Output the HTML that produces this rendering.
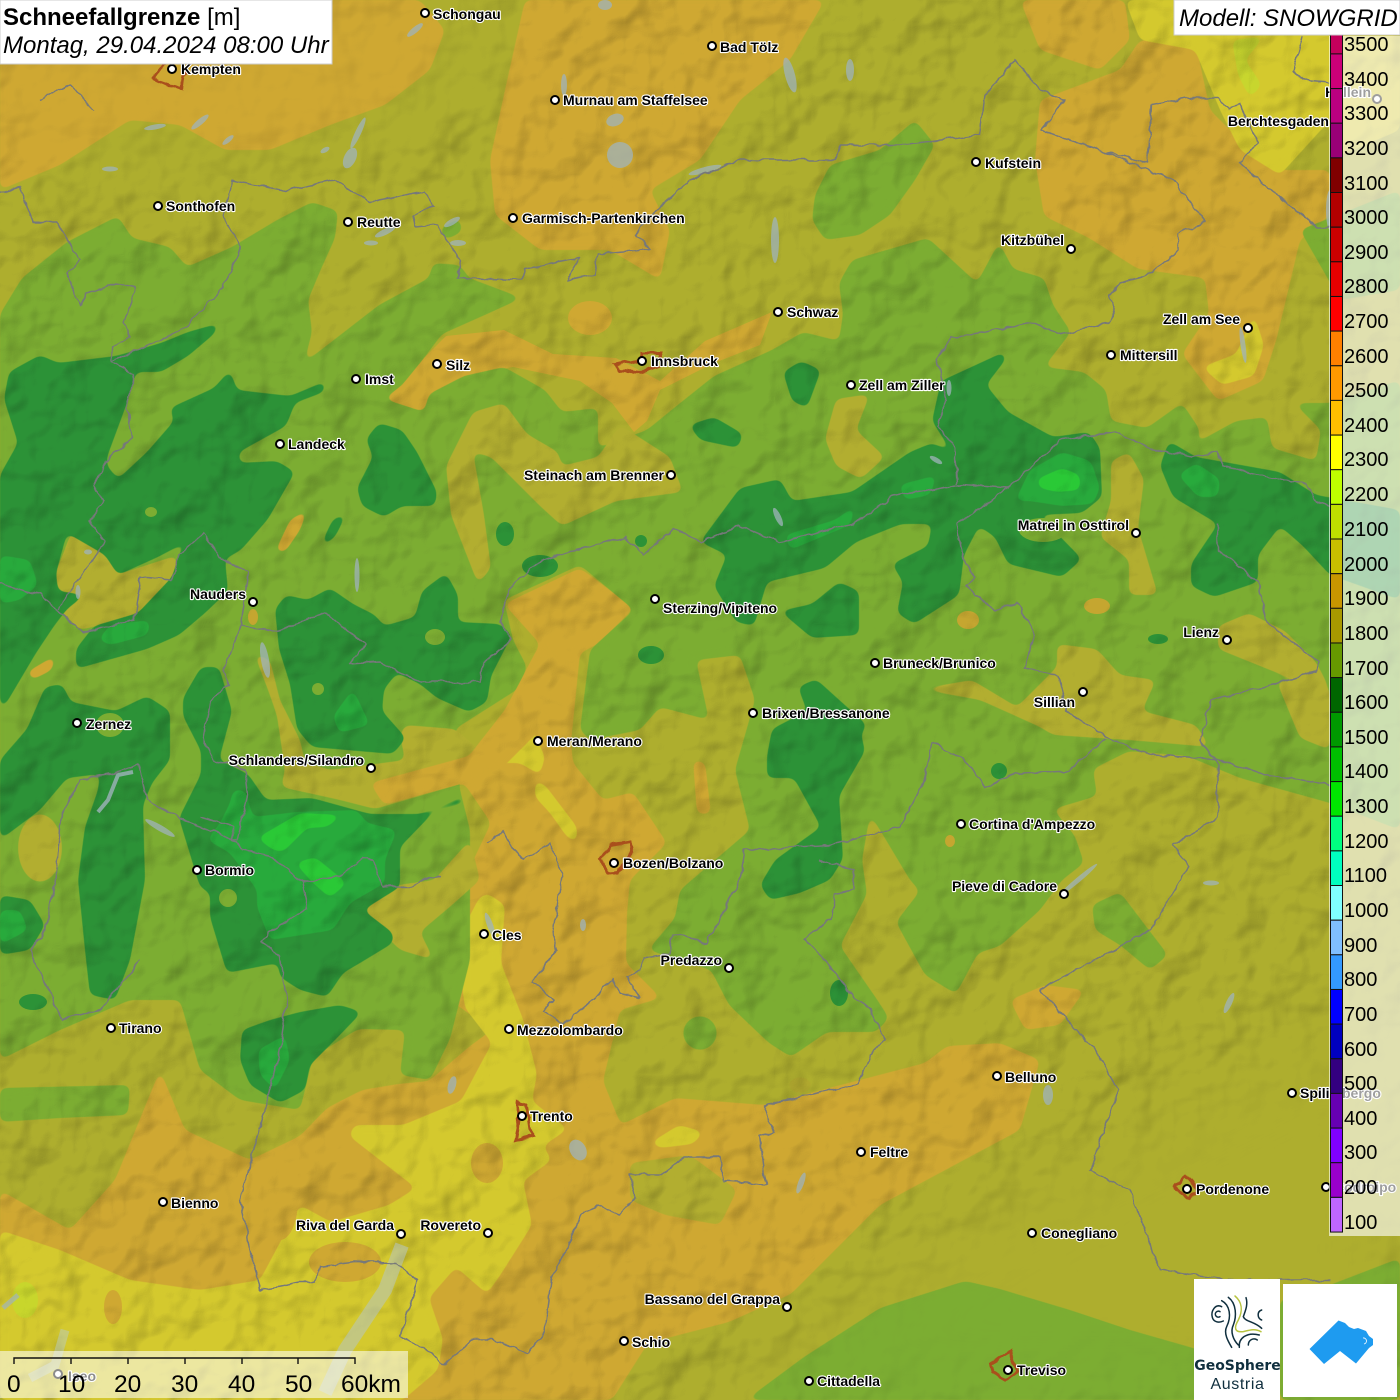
<!DOCTYPE html>
<html lang="de"><head><meta charset="utf-8"><title>Schneefallgrenze</title>
<style>
html,body{margin:0;padding:0;background:#aaa92c;overflow:hidden;width:1400px;height:1400px}
#w{position:relative;width:1400px;height:1400px;overflow:hidden;font-family:"Liberation Sans",sans-serif}
svg{position:absolute;left:0;top:0}
.l text{font:bold 14px "Liberation Sans",sans-serif;fill:#000;stroke:#fff;stroke-width:2.2px;paint-order:stroke;stroke-linejoin:round;dominant-baseline:central}
.l circle{fill:#fff;stroke:#000;stroke-width:2}
.e{text-anchor:end}
.leg text{font:20px "Liberation Sans",sans-serif;fill:#000;dominant-baseline:central}
</style></head><body><div id="w">
<svg width="1400" height="1400" viewBox="0 0 1400 1400">
<defs>
<filter id="g" x="-5%" y="-5%" width="110%" height="110%" color-interpolation-filters="sRGB"><feGaussianBlur stdDeviation="4"/><feComponentTransfer><feFuncA type="linear" slope="10" intercept="-4.5"/></feComponentTransfer></filter>
<filter id="hill" x="0" y="0" width="100%" height="100%" color-interpolation-filters="sRGB"><feTurbulence type="fractalNoise" baseFrequency="0.02" numOctaves="3" seed="11" result="n"/><feDiffuseLighting in="n" surfaceScale="9" diffuseConstant="1.2" lighting-color="#fff"><feDistantLight azimuth="225" elevation="55"/></feDiffuseLighting></filter>
<filter id="bl" x="-10%" y="-10%" width="120%" height="120%"><feGaussianBlur stdDeviation="40"/></filter>
<filter id="wig" x="-2%" y="-2%" width="104%" height="104%"><feTurbulence type="fractalNoise" baseFrequency="0.09" numOctaves="2" seed="3"/><feDisplacementMap in="SourceGraphic" scale="6" xChannelSelector="R" yChannelSelector="G"/></filter>
<mask id="mm" maskUnits="userSpaceOnUse" x="0" y="0" width="1400" height="1400"><rect width="1400" height="1400" fill="#fff"/><g filter="url(#bl)"><path d="M700 1400L1010 1200L1400 1000V1400Z" fill="#000"/><path d="M0 0H520V90L250 170L0 160Z" fill="#444"/></g></mask>
</defs>
<rect width="1400" height="1400" fill="#aeae2e"/>

<!-- orange 1900 -->
<g fill="#cfa832" filter="url(#g)">
<path d="M0 0H420L445 30L430 70L385 105L330 125L270 150L225 150L180 125L130 120L60 165L0 190Z"/>
<path d="M525 0L505 90L490 160L495 215L540 250L610 250L660 280L670 230L650 190L700 160L740 100L790 60L825 0Z"/>
<path d="M1020 0L1040 50L1100 70L1130 40L1125 0Z"/>
<path d="M1044 216L1089 238L1138 269L1205 278L1209 314L1182 354L1218 401L1263 381L1276 341L1289 287L1300 240L1330 215L1330 170L1280 170L1240 140L1210 110L1195 40L1140 40L1120 70L1040 100L1035 160Z"/>
<path d="M504 604L580 568L634 608L598 644L580 653L576 693L571 742L573 763L603 800L633 792L667 843L630 880L627 913L626 963L661 998L620 1010L603 1081L621 1125L675 1098L764 1105L925 1063L947 1046L1000 1043L1040 1060L1020 1130L880 1205L791 1294L729 1322L648 1343L612 1400L0 1400L0 1190L70 1230L115 1180L160 1070L185 1130L250 1160L300 1136L327 1108L362 1090L398 1084L429 1081L470 1046L492 1030L447 998L420 932L452 905L491 823L464 783L384 805L370 783L469 756L505 710L540 644Z"/>
<path d="M1010 1000L1045 985L1085 990L1060 1025L1025 1030Z"/>
</g>
<!-- yellow 2000 -->
<g fill="#d4c92e" filter="url(#g)">
<path d="M1125 0L1140 40L1195 50L1220 110L1240 150L1280 175L1330 120V0Z"/>
<path d="M1330 0H1400V130L1330 160Z"/>
<path d="M487 893L505 905L501 963L523 1019L537 1074L532 1101L568 1129L543 1146L552 1160L523 1181L532 1225L501 1274L487 1294L456 1267L429 1298L443 1339L438 1370L403 1400L0 1400L0 1230L60 1250L130 1280L200 1290L260 1280L300 1205L331 1222L389 1205L416 1188L349 1136L354 1125L403 1125L461 1101L479 1067L492 1043L465 1008L461 977L465 925L479 898Z"/>
<path d="M470 763L500 740L533 730L545 757L540 775L520 763L487 763Z"/>
<path d="M535 780L545 785L577 827L577 843L567 837L550 813L535 797Z"/>
<path d="M1202 367L1236 354L1254 314L1264 345L1254 376L1222 385Z"/>
<path d="M650 1143L679 1125L704 1132L693 1144L660 1148Z"/>
</g>
<path d="M1232 40L1265 36L1245 60L1262 85L1250 98L1238 75Z" fill="#c8d62e" filter="url(#g)"/>
<ellipse cx="25" cy="1300" rx="13" ry="18" fill="#c8d62c"/>
<g fill="#cfa832">
<ellipse cx="487" cy="1163" rx="16" ry="20"/><ellipse cx="345" cy="1262" rx="36" ry="20"/><ellipse cx="113" cy="1307" rx="9" ry="17"/><ellipse cx="280" cy="1200" rx="18" ry="40"/>
<ellipse cx="590" cy="318" rx="22" ry="17"/>
<path d="M424 358L446 336L504 330L553 354L616 358L660 381L705 341L772 312L760 345L714 363L660 390L647 421L634 432L612 403L580 381L513 367L464 376L424 412L384 399L402 385Z"/>
</g>

<!-- green 1700 -->
<g fill="#7cad32" filter="url(#g)">
<path d="M0 314L22 278L67 242L118 216L132 238L170 247L187 267L232 247L277 220L312 202L338 211L335 238L321 269L308 300L312 332L304 363L339 336L379 305L429 278L433 263L460 265L469 278L522 298L487 314L442 334L424 358L402 385L384 399L424 412L429 394L464 376L504 367L545 390L562 412L598 408L598 448L647 430L674 408L714 376L772 350L803 332L839 341L843 314L839 283L852 260L928 238L977 283L999 242L1013 269L1044 278L1053 305L1071 332L1044 367L1084 372L1106 390L1111 421L1147 428L1182 403L1200 430L1196 443L1236 421L1267 417L1272 448L1316 461L1321 430L1294 403L1330 403L1400 380V830L1330 803L1240 778L1187 756L1129 751L1093 769L1097 796L1053 809L1075 836L1084 863L1062 880L1040 910L1000 946L978 953L956 994L925 975L896 922L920 891L910 880L880 830L870 814L862 860L867 894L840 946L876 998L889 1018L876 1032L827 1032L791 1057L769 1043L729 1005L711 970L648 950L675 918L680 890L750 830L735 770L755 700L740 655L696 660L709 720L660 707L640 730L590 740L580 730L590 650L634 610L580 565L504 600L513 640L527 667L518 689L455 729L460 790L470 830L470 960L450 1039L430 1080L400 1075L405 1030L358 1029L313 1057L300 1110L240 1100L200 1070L180 1000L130 1000L60 1030L0 1060Z"/>
<path d="M815 195L830 165L880 150L915 120L935 145L915 180L890 215L860 235L825 240L812 220Z"/>
<path d="M1092 905L1120 892L1145 925L1168 955L1150 970L1120 945L1095 930Z"/>
<path d="M440 228L460 218L462 232L445 240Z"/>
<path d="M746 1400L804 1357L880 1308L965 1281L1000 1289L1070 1310L1130 1330L1200 1350V1400Z"/>
<path d="M1330 1285L1400 1258V1400H1280V1300Z"/>
<path d="M1300 230L1400 190V290L1340 300Z"/>
<path d="M0 1088L130 1085L128 1115L60 1118L0 1122Z"/>
<ellipse cx="700" cy="1033" rx="17" ry="17"/><ellipse cx="800" cy="1085" rx="12" ry="8" fill="#b0a82e"/>
</g>

<!-- olive and orange patches over green -->
<g fill="#b2ae30" filter="url(#g)">
<path d="M446 466L473 412L504 403L527 434L558 452L562 466L598 457L620 425L670 457L683 492L616 501L562 526L540 506L491 457L473 452L484 515L491 568L478 584L451 515Z"/>
<path d="M54 577L71 533L107 537L116 575L178 555L172 582L134 617L80 630L58 608Z"/>
<path d="M254 653L268 690L277 716L285 770L281 787L340 800L375 809L464 783L480 750L455 729L405 725L400 735L405 760L330 770L305 762L300 740L280 700L270 660Z"/>
<path d="M919 689L972 680L1017 707L1057 667L1057 644L1097 649L1120 675L1156 680L1142 711L1196 725L1210 747L1129 740L1053 735L1040 727L980 700Z"/>
<path d="M1218 626L1249 613L1285 631L1316 662L1330 689L1285 676L1218 649Z"/>
<path d="M1111 461L1129 452L1144 479L1138 528L1158 595L1129 595L1129 560L1100 537L1111 501Z"/>
<path d="M825 439L836 399L870 394L856 430L885 457L861 479L836 466Z"/>
<path d="M1276 680L1330 690L1330 750L1300 738Z"/>
<path d="M362 912L398 885L434 880L470 840L480 880L452 905L420 932L434 960L400 950Z"/>
<path d="M630 1163L690 1155L737 1190L720 1225L665 1215L630 1200Z"/>
<ellipse cx="40" cy="848" rx="22" ry="34"/>
<ellipse cx="19" cy="632" rx="15" ry="15"/>
</g>
<g fill="#cfa832" filter="url(#g)">
<path d="M370 783L469 756L505 710L540 644L560 650L550 720L500 770L464 783L384 805Z"/>
<path d="M693 760L705 762L711 814L697 814Z"/>
<path d="M275 552L290 520L308 509L300 530L285 552Z"/>
<path d="M27 672L56 655L52 670L32 680Z"/>
</g>
<ellipse cx="1097" cy="606" rx="13" ry="8" fill="#c5a630"/><ellipse cx="968" cy="620" rx="11" ry="9" fill="#c5a630"/><ellipse cx="950" cy="841" rx="5" ry="6" fill="#c5a630"/><ellipse cx="253" cy="617" rx="5" ry="8" fill="#c5a630"/>

<!-- dark green 1600 -->
<g fill="#2c9237" filter="url(#g)">
<path d="M4 399L9 372L40 355L58 363L116 356L161 343L188 332L220 323L214 334L188 356L161 372L136 372L127 403L107 457L107 466L118 479L147 452L174 421L170 408L214 388L230 370L237 390L290 396L326 381L324 392L295 403L286 426L239 452L239 463L277 461L295 472L268 519L241 550L225 559L228 591L205 613L179 635L147 649L76 669L76 649L94 626L138 613L172 577L179 555L188 541L158 557L118 575L105 555L67 533L56 573L58 591L85 595L67 609L54 626L36 653L4 707L0 707L0 475L18 443Z"/>
<path d="M366 439L379 423L402 430L417 452L437 492L435 506L402 506L384 517L362 506L357 488L373 457Z"/>
<path d="M322 542L333 519L347 513L335 537L324 546Z"/>
<path d="M275 609L286 595L308 600L330 588L353 604L375 615L384 626L415 617L422 591L446 573L458 595L458 622L500 624L512 635L491 676L487 702L469 712L437 698L420 684L397 673L384 689L382 711L406 738L393 754L312 747L297 729L290 684L279 649Z"/>
<path d="M0 760L27 729L45 687L62 684L71 702L116 711L147 696L170 711L170 760L152 783L143 805L145 880L130 960L115 1000L90 995L85 950L78 880L85 827L98 790L100 774L67 778L40 810L0 840Z"/>
<path d="M0 895L30 900L45 925L30 950L0 955Z"/>
<path d="M183 698L201 667L219 667L232 711L219 760L248 774L266 800L312 798L370 814L420 814L464 796L464 803L433 813L400 847L400 887L363 910L393 933L393 943L360 963L343 973L327 997L300 990L280 977L278 963L227 973L210 917L210 893L200 887L179 818L201 774L201 751L183 716Z"/>
<path d="M242 1030L270 1020L300 1012L340 1005L362 1012L335 1040L310 1065L305 1090L280 1103L250 1085L240 1060Z"/>
<path d="M700 542L740 488L780 479L792 501L852 492L910 452L932 443L952 452L932 421L941 381L1004 352L1006 359L986 385L1008 412L1053 437L1089 432L1100 448L1102 497L1082 513L1039 515L1082 559L1062 577L1008 564L995 537L979 526L964 555L959 595L914 624L897 613L903 582L892 564L928 546L932 524L901 524L856 542L825 568L767 582L754 626L736 622L714 586L727 555Z"/>
<path d="M780 611L812 604L839 582L859 591L859 635L812 638Z"/>
<path d="M689 425L714 417L743 434L738 448L700 440Z"/>
<path d="M783 372L801 361L821 370L807 408L792 401Z"/>
<path d="M1160 466L1169 441L1196 457L1280 472L1316 495L1400 510V600L1330 575L1303 546L1280 526L1258 555L1258 582L1214 597L1191 586L1191 564L1218 524L1173 497Z"/>
<path d="M798 687L816 679L867 725L861 734L865 751L839 796L843 859L830 880L800 893L770 900L760 885L775 860L821 827L794 778L767 778L767 756L772 729L807 711Z"/>
</g>
<g fill="#2c9237"><ellipse cx="505" cy="534" rx="9" ry="12"/><ellipse cx="540" cy="566" rx="18" ry="11"/><ellipse cx="641" cy="541" rx="6" ry="6"/><ellipse cx="651" cy="655" rx="13" ry="9"/><ellipse cx="1158" cy="639" rx="10" ry="5"/><ellipse cx="999" cy="771" rx="8" ry="8"/><ellipse cx="839" cy="993" rx="9" ry="13"/><ellipse cx="33" cy="1002" rx="14" ry="8"/></g>
<!-- holes -->
<g fill="#7cad32"><ellipse cx="1043" cy="530" rx="24" ry="12"/><ellipse cx="228" cy="898" rx="9" ry="9" /><ellipse cx="435" cy="637" rx="10" ry="8"/><ellipse cx="318" cy="689" rx="6" ry="6"/><ellipse cx="151" cy="512" rx="6" ry="5"/><ellipse cx="110" cy="725" rx="14" ry="12"/></g>

<!-- mid 1500 -->
<g fill="#28aa3c" filter="url(#g)">
<path d="M233 790L245 790L253 817L297 812L357 810L367 823L397 830L385 860L385 883L350 903L333 930L270 940L257 907L257 890L230 853L207 840L220 823L230 803Z"/>
<path d="M353 689L370 725L339 733L333 716Z"/>
<path d="M0 555L30 560L38 585L20 600L0 604Z"/>
<path d="M98 640L110 625L150 620L148 635L110 645Z"/>
<path d="M899 485L937 475L930 495L905 500Z"/>
<path d="M785 535L835 520L856 505L850 525L790 550Z"/>
<path d="M1015 501L1030 470L1062 452L1091 461L1100 488L1093 504L1062 506L1030 501Z"/>
<path d="M1178 475L1196 463L1220 479L1218 497L1198 497Z"/>
<path d="M258 1050L285 1035L290 1060L275 1090L260 1075Z"/>
<path d="M0 910L20 910L28 930L0 945Z"/>
</g>
<!-- bright 1400 -->
<g fill="#2ac936" filter="url(#g)">
<path d="M257 838L300 813L343 815L327 827L307 828L283 852L273 850Z"/>
<path d="M295 863L315 857L347 883L330 898L313 883Z"/>
<path d="M1037 479L1062 468L1080 475L1080 490L1057 492L1039 488Z"/>
</g>

<!-- hillshade -->
<rect width="1400" height="1400" filter="url(#hill)" mask="url(#mm)" style="mix-blend-mode:multiply" opacity=".36"/>

<!-- water -->
<g fill="#9fb3bb" fill-opacity=".75">
<ellipse cx="200" cy="122" rx="11" ry="3" transform="rotate(-40 200 122)"/><ellipse cx="228" cy="140" rx="7" ry="2.5" transform="rotate(-40 228 140)"/><ellipse cx="155" cy="127" rx="11" ry="2.5" transform="rotate(-10 155 127)"/><ellipse cx="110" cy="169" rx="8" ry="2.5"/><ellipse cx="325" cy="150" rx="5" ry="2.5" transform="rotate(-30 325 150)"/><ellipse cx="358" cy="133" rx="3" ry="17" transform="rotate(25 358 133)"/><ellipse cx="350" cy="158" rx="6" ry="11" transform="rotate(25 350 158)"/><ellipse cx="415" cy="30" rx="10" ry="3" transform="rotate(-40 415 30)"/><ellipse cx="605" cy="5" rx="7" ry="5"/><ellipse cx="564" cy="85" rx="3" ry="11"/><ellipse cx="620" cy="155" rx="13" ry="13" transform="rotate(20 620 155)"/><ellipse cx="615" cy="120" rx="9" ry="6" transform="rotate(-20 615 120)"/><ellipse cx="790" cy="75" rx="5" ry="18" transform="rotate(-15 790 75)"/><ellipse cx="705" cy="170" rx="17" ry="3" transform="rotate(-15 705 170)"/><ellipse cx="775" cy="240" rx="4" ry="23"/><ellipse cx="850" cy="70" rx="4" ry="11"/><ellipse cx="452" cy="222" rx="9" ry="3" transform="rotate(-30 452 222)"/><ellipse cx="371" cy="243" rx="7" ry="2.5"/><ellipse cx="385" cy="232" rx="11" ry="3" transform="rotate(-25 385 232)"/><ellipse cx="458" cy="243" rx="8" ry="3"/>
<ellipse cx="160" cy="828" rx="17" ry="3" transform="rotate(30 160 828)"/><ellipse cx="265" cy="660" rx="4" ry="18" transform="rotate(-10 265 660)"/><ellipse cx="357" cy="575" rx="2.5" ry="17"/><ellipse cx="78" cy="592" rx="2.5" ry="7"/><ellipse cx="88" cy="552" rx="4" ry="2.5"/><ellipse cx="778" cy="517" rx="3" ry="10" transform="rotate(-25 778 517)"/><ellipse cx="936" cy="460" rx="7" ry="2.5" transform="rotate(30 936 460)"/><ellipse cx="949" cy="388" rx="2.5" ry="8"/><ellipse cx="490" cy="925" rx="3" ry="13" transform="rotate(-20 490 925)"/><ellipse cx="452" cy="1085" rx="4" ry="9" transform="rotate(15 452 1085)"/><ellipse cx="583" cy="925" rx="3" ry="6"/><ellipse cx="578" cy="1150" rx="8" ry="11" transform="rotate(-30 578 1150)"/><ellipse cx="801" cy="1183" rx="3" ry="11" transform="rotate(20 801 1183)"/><ellipse cx="1229" cy="1003" rx="3" ry="11" transform="rotate(25 1229 1003)"/><ellipse cx="1048" cy="1095" rx="5" ry="10"/><ellipse cx="1211" cy="883" rx="8" ry="2.5"/><ellipse cx="1078" cy="880" rx="2.5" ry="25" transform="rotate(50 1078 880)"/><ellipse cx="1243" cy="345" rx="2.5" ry="18" transform="rotate(-8 1243 345)"/><ellipse cx="1330" cy="210" rx="4" ry="20"/>
</g>
<path d="M133 772L118 775L108 800L98 812" fill="none" stroke="#9fb3bb" stroke-width="4" stroke-opacity=".8"/>
<path d="M402 1245L385 1290L345 1350L325 1393" fill="none" stroke="#b5c4c4" stroke-width="14" stroke-opacity=".55"/>
<path d="M65 1330L55 1365L30 1378" fill="none" stroke="#b8cbc4" stroke-width="9" stroke-opacity=".5"/>
<path d="M3 1308L18 1295" fill="none" stroke="#9fb3bb" stroke-width="5" stroke-opacity=".7"/>

<!-- borders -->
<g fill="none" stroke="#76787a" stroke-width="1.5" stroke-linejoin="round" filter="url(#wig)">
<path d="M0 193L20 187L33 222L56 222L67 240L80 260L67 274L80 305L87 294L116 283L136 287L123 323L130 336L112 347L112 361L134 374L127 408L132 437L107 459L94 486L103 501L89 521L105 542L85 570L58 609"/>
<path d="M0 584L40 595L58 611L83 633L134 620L141 577L172 580L179 555L203 533L221 559L248 573L241 626L277 631L326 613L366 644L350 664L379 662L420 682L480 682L484 662L511 640L500 622L511 586L542 559L625 537L643 555L674 528L700 542L740 526L780 542L852 524L892 497L964 484L1008 488L957 524L964 560L975 577L966 586L995 611L1017 602L1035 635L1024 669L1057 675L1066 711L1106 736L1147 754L1218 760L1263 774L1330 785"/>
<path d="M112 361L187 327L223 287L241 247L223 216L232 180L286 191L335 180L370 202L424 191L433 205L413 216L415 227L437 225L460 260L457 278L522 280L525 269L580 258L567 280L594 274L598 254L650 249L636 234L661 205L690 180L740 160L835 160L840 145L900 145L980 135L985 95L1015 60L1040 90L1065 100L1040 130L1100 150L1148 163L1152 105L1190 98L1217 98L1228 108L1240 105L1258 143L1240 163L1270 190L1317 227L1330 227"/>
<path d="M1303 37L1293 70L1303 80L1330 82"/>
<path d="M40 100L70 85L95 110"/>
<path d="M1100 150L1173 180L1187 198L1205 222L1178 234L1178 251L1151 274L1120 283L1109 296L1115 314L1109 323L1062 334L1030 323L952 338L937 358L946 399L937 425L955 448L957 484"/>
<path d="M1008 488L1062 439L1115 432L1151 448L1191 457L1218 452L1223 466L1285 481L1307 484L1316 501L1330 506"/>
<path d="M1218 524L1218 550L1258 582L1267 622L1318 662L1316 671L1276 684L1211 700L1200 742L1218 765"/>
<path d="M932 742L964 760L986 787L1013 774L1068 771L1106 738"/>
<path d="M932 742L923 783L901 827L830 845L745 850L740 880L717 924L706 944L673 934L670 953L644 958L639 970L626 976L639 998L621 993L612 979L595 998L563 1024L543 1012L554 1000L532 982L557 950L552 936L558 900L563 873L550 843L525 860L513 850L503 832L487 842"/>
<path d="M1218 818L1173 845L1189 867L1150 930L1040 990L1095 1050L1118 1090L1090 1170L1130 1190L1160 1270L1230 1280L1330 1280"/>
<path d="M1218 765L1218 818"/>
<path d="M241 626L223 671L228 684L210 702L203 738L214 760L245 769L248 796L237 841L179 818L147 800L138 765L112 774L80 780L62 814L56 880L45 930L30 950L62 1020L100 1010L140 960"/>
<path d="M200 817L233 827L233 840L243 850L273 857L303 883L343 875L363 858L373 860L383 887L413 887L420 880L440 877"/>
<path d="M303 883L308 908L273 930L260 940L280 957L283 980L287 1000L280 1050L265 1110L240 1200L260 1290L300 1282L316 1282L320 1267L354 1262L396 1263L418 1281L400 1336L432 1353L443 1365L474 1339L492 1339L528 1353L545 1331L552 1277L572 1239L581 1215L599 1205L619 1215L635 1198L630 1174L662 1174L684 1157L720 1157L724 1181L766 1184L760 1136L773 1132L764 1105L795 1098L858 1084L871 1055L885 1039L869 1008L854 998L831 967L804 938L831 919L836 893L854 889L854 870L820 860"/>
</g>

<!-- municipalities -->
<g fill="none" stroke="#a9501c" stroke-width="3" stroke-linejoin="miter" filter="url(#wig)">
<path d="M165 62L153 78L168 85L182 88L185 72"/>
<path d="M615 365L640 360L642 353L660 353L662 365L640 373L620 370Z"/>
<path d="M600 860L610 845L630 842L632 852L618 872L610 873L603 863Z"/>
<path d="M517 1102L526 1104L530 1130L534 1136L516 1140L519 1120Z"/>
<path d="M1174 1187L1185 1175L1198 1190L1190 1199Z"/>
<path d="M991 1363L1010 1352L1018 1372L1005 1380L993 1373Z"/>
</g>

<!-- city labels -->
<g class="l">
<circle cx="425" cy="13" r="4"/><text x="433" y="14">Schongau</text>
<circle cx="712" cy="46" r="4"/><text x="720" y="47">Bad Tölz</text>
<circle cx="172" cy="69" r="4"/><text x="181" y="69">Kempten</text>
<circle cx="555" cy="100" r="4"/><text x="563" y="100">Murnau am Staffelsee</text>
<circle cx="976" cy="162" r="4"/><text x="985" y="163">Kufstein</text>
<circle cx="158" cy="206" r="4"/><text x="166" y="206">Sonthofen</text>
<circle cx="348" cy="222" r="4"/><text x="357" y="222">Reutte</text>
<circle cx="513" cy="218" r="4"/><text x="522" y="218">Garmisch-Partenkirchen</text>
<circle cx="1071" cy="249" r="4"/><text class="e" x="1064" y="240">Kitzbühel</text>
<circle cx="778" cy="312" r="4"/><text x="787" y="312">Schwaz</text>
<circle cx="1248" cy="328" r="4"/><text class="e" x="1240" y="319">Zell am See</text>
<circle cx="1111" cy="355" r="4"/><text x="1120" y="355">Mittersill</text>
<circle cx="642" cy="361" r="4"/><text x="651" y="361">Innsbruck</text>
<circle cx="851" cy="385" r="4"/><text x="859" y="385">Zell am Ziller</text>
<circle cx="356" cy="379" r="4"/><text x="365" y="379">Imst</text>
<circle cx="437" cy="364" r="4"/><text x="446" y="365">Silz</text>
<circle cx="280" cy="444" r="4"/><text x="288" y="444">Landeck</text>
<circle cx="671" cy="475" r="4"/><text class="e" x="664" y="475">Steinach am Brenner</text>
<circle cx="1136" cy="533" r="4"/><text class="e" x="1129" y="525">Matrei in Osttirol</text>
<circle cx="253" cy="602" r="4"/><text class="e" x="246" y="594">Nauders</text>
<circle cx="655" cy="599" r="4"/><text x="663" y="608">Sterzing/Vipiteno</text>
<circle cx="1227" cy="640" r="4"/><text class="e" x="1219" y="632">Lienz</text>
<circle cx="875" cy="663" r="4"/><text x="883" y="663">Bruneck/Brunico</text>
<circle cx="1083" cy="692" r="4"/><text class="e" x="1075" y="702">Sillian</text>
<circle cx="753" cy="713" r="4"/><text x="762" y="713">Brixen/Bressanone</text>
<circle cx="77" cy="723" r="4"/><text x="86" y="724">Zernez</text>
<circle cx="538" cy="741" r="4"/><text x="547" y="741">Meran/Merano</text>
<circle cx="371" cy="768" r="4"/><text class="e" x="364" y="760">Schlanders/Silandro</text>
<circle cx="961" cy="824" r="4"/><text x="969" y="824">Cortina d'Ampezzo</text>
<circle cx="614" cy="863" r="4"/><text x="623" y="863">Bozen/Bolzano</text>
<circle cx="197" cy="870" r="4"/><text x="205" y="870">Bormio</text>
<circle cx="1064" cy="894" r="4"/><text class="e" x="1057" y="886">Pieve di Cadore</text>
<circle cx="484" cy="934" r="4"/><text x="492" y="935">Cles</text>
<circle cx="729" cy="968" r="4"/><text class="e" x="722" y="960">Predazzo</text>
<circle cx="111" cy="1028" r="4"/><text x="119" y="1028">Tirano</text>
<circle cx="509" cy="1029" r="4"/><text x="517" y="1030">Mezzolombardo</text>
<circle cx="997" cy="1076" r="4"/><text x="1005" y="1077">Belluno</text>
<circle cx="1292" cy="1093" r="4"/><text x="1300" y="1093">Spilimbergo</text>
<circle cx="522" cy="1116" r="4"/><text x="530" y="1116">Trento</text>
<circle cx="861" cy="1152" r="4"/><text x="870" y="1152">Feltre</text>
<circle cx="1187" cy="1189" r="4"/><text x="1196" y="1189">Pordenone</text>
<circle cx="1326" cy="1187" r="4"/><text x="1334" y="1187">Codroipo</text>
<circle cx="163" cy="1202" r="4"/><text x="171" y="1203">Bienno</text>
<circle cx="401" cy="1234" r="4"/><text class="e" x="394" y="1225">Riva del Garda</text>
<circle cx="488" cy="1233" r="4"/><text class="e" x="481" y="1225">Rovereto</text>
<circle cx="1032" cy="1233" r="4"/><text x="1041" y="1233">Conegliano</text>
<circle cx="787" cy="1307" r="4"/><text class="e" x="780" y="1299">Bassano del Grappa</text>
<circle cx="624" cy="1341" r="4"/><text x="632" y="1342">Schio</text>
<circle cx="1008" cy="1370" r="4"/><text x="1017" y="1370">Treviso</text>
<circle cx="809" cy="1381" r="4"/><text x="817" y="1381">Cittadella</text>
<circle cx="58" cy="1374" r="4"/><text x="68" y="1376">Iseo</text>
<circle cx="1377" cy="99" r="4"/><text class="e" x="1371" y="92">Hallein</text>
<circle cx="1336" cy="121" r="4"/><text class="e" x="1329" y="121">Berchtesgaden</text>
</g>

<!-- legend overlay -->
<rect x="1329" y="36" width="71" height="1200" fill="#fff" fill-opacity=".62"/>
<g stroke="#111" stroke-width="1">
<rect x="1330.5" y="19.3" width="12" height="34.65" fill="#c4005c"/>
<rect x="1330.5" y="53.9" width="12" height="34.65" fill="#cc0078"/>
<rect x="1330.5" y="88.6" width="12" height="34.65" fill="#bb0080"/>
<rect x="1330.5" y="123.2" width="12" height="34.65" fill="#990077"/>
<rect x="1330.5" y="157.9" width="12" height="34.65" fill="#800000"/>
<rect x="1330.5" y="192.5" width="12" height="34.65" fill="#b30000"/>
<rect x="1330.5" y="227.2" width="12" height="34.65" fill="#cc0000"/>
<rect x="1330.5" y="261.8" width="12" height="34.65" fill="#e60000"/>
<rect x="1330.5" y="296.5" width="12" height="34.65" fill="#ff0000"/>
<rect x="1330.5" y="331.1" width="12" height="34.65" fill="#ff8000"/>
<rect x="1330.5" y="365.8" width="12" height="34.65" fill="#ff9900"/>
<rect x="1330.5" y="400.4" width="12" height="34.65" fill="#ffbf00"/>
<rect x="1330.5" y="435.1" width="12" height="34.65" fill="#ffff00"/>
<rect x="1330.5" y="469.7" width="12" height="34.65" fill="#bfff00"/>
<rect x="1330.5" y="504.4" width="12" height="34.65" fill="#bfdf00"/>
<rect x="1330.5" y="539" width="12" height="34.65" fill="#c8bf00"/>
<rect x="1330.5" y="573.7" width="12" height="34.65" fill="#c89600"/>
<rect x="1330.5" y="608.3" width="12" height="34.65" fill="#a89900"/>
<rect x="1330.5" y="643" width="12" height="34.65" fill="#669900"/>
<rect x="1330.5" y="677.6" width="12" height="34.65" fill="#006600"/>
<rect x="1330.5" y="712.3" width="12" height="34.65" fill="#009900"/>
<rect x="1330.5" y="746.9" width="12" height="34.65" fill="#00bf00"/>
<rect x="1330.5" y="781.6" width="12" height="34.65" fill="#00e600"/>
<rect x="1330.5" y="816.2" width="12" height="34.65" fill="#00ff80"/>
<rect x="1330.5" y="850.9" width="12" height="34.65" fill="#00ffbf"/>
<rect x="1330.5" y="885.5" width="12" height="34.65" fill="#80ffff"/>
<rect x="1330.5" y="920.2" width="12" height="34.65" fill="#80bfff"/>
<rect x="1330.5" y="954.8" width="12" height="34.65" fill="#3399ff"/>
<rect x="1330.5" y="989.5" width="12" height="34.65" fill="#0000ff"/>
<rect x="1330.5" y="1024.1" width="12" height="34.65" fill="#0000bf"/>
<rect x="1330.5" y="1058.8" width="12" height="34.65" fill="#330080"/>
<rect x="1330.5" y="1093.4" width="12" height="34.65" fill="#6600b3"/>
<rect x="1330.5" y="1128.1" width="12" height="34.65" fill="#8000ff"/>
<rect x="1330.5" y="1162.7" width="12" height="34.65" fill="#9900cc"/>
<rect x="1330.5" y="1197.4" width="12" height="34.65" fill="#bf66ff"/>
</g>
<g class="leg">
<text x="1344" y="45">3500</text><text x="1344" y="80">3400</text><text x="1344" y="114">3300</text><text x="1344" y="149">3200</text><text x="1344" y="184">3100</text><text x="1344" y="218">3000</text><text x="1344" y="253">2900</text><text x="1344" y="287">2800</text><text x="1344" y="322">2700</text><text x="1344" y="357">2600</text><text x="1344" y="391">2500</text><text x="1344" y="426">2400</text><text x="1344" y="460">2300</text><text x="1344" y="495">2200</text><text x="1344" y="530">2100</text><text x="1344" y="565">2000</text><text x="1344" y="599">1900</text><text x="1344" y="634">1800</text><text x="1344" y="669">1700</text><text x="1344" y="703">1600</text><text x="1344" y="738">1500</text><text x="1344" y="772">1400</text><text x="1344" y="807">1300</text><text x="1344" y="842">1200</text><text x="1344" y="876">1100</text><text x="1344" y="911">1000</text><text x="1344" y="946">900</text><text x="1344" y="980">800</text><text x="1344" y="1015">700</text><text x="1344" y="1050">600</text><text x="1344" y="1084">500</text><text x="1344" y="1119">400</text><text x="1344" y="1153">300</text><text x="1344" y="1188">200</text><text x="1344" y="1223">100</text>
</g>

<!-- scale -->
<rect x="0" y="1351" width="408" height="47" fill="#fff" fill-opacity=".55"/>
<path d="M14 1364V1358H355V1364M71 1358V1364M128 1358V1364M185 1358V1364M242 1358V1364M298 1358V1364" fill="none" stroke="#111" stroke-width="1.4"/>
<g font-family="Liberation Sans, sans-serif" font-size="24.5" fill="#000">
<text x="7" y="1392">0</text><text x="58" y="1392">10</text><text x="114" y="1392">20</text><text x="171" y="1392">30</text><text x="228" y="1392">40</text><text x="285" y="1392">50</text><text x="341" y="1392">60km</text>
</g>

<!-- title boxes -->
<rect x="0" y="0" width="332" height="64" fill="#fff" stroke="#ccc" stroke-width="1"/>
<text x="3" y="25" font-family="Liberation Sans, sans-serif" font-size="24" fill="#000"><tspan font-weight="bold">Schneefallgrenze</tspan> [m]</text>
<text x="3" y="53" font-family="Liberation Sans, sans-serif" font-size="24" font-style="italic" fill="#000">Montag, 29.04.2024 08:00 Uhr</text>
<rect x="1174" y="0" width="226" height="35" fill="#fff" stroke="#ccc" stroke-width="1"/>
<text x="1179" y="26" font-family="Liberation Sans, sans-serif" font-size="24" font-style="italic" fill="#000">Modell: SNOWGRID</text>

<!-- logos -->
<rect x="1194" y="1279" width="86" height="121" fill="#fff"/>
<rect x="1283" y="1284" width="114" height="113" fill="#fff"/>
<g transform="translate(1180 1260) scale(.3333)" fill="none" stroke="#102f3e" stroke-width="4.5" stroke-linecap="round">
<path d="M120 155A9 9 0 1 0 120 170"/>
<path d="M125 140C105 130 92 155 97 172C100 185 115 190 130 183"/>
<path d="M125 122C150 135 155 170 140 200C130 220 145 245 155 262"/>
<path d="M145 112C170 130 170 170 160 195C150 215 160 240 175 255"/>
<path d="M198 113C205 135 195 155 190 170C195 185 225 185 245 205"/>
<path d="M245 150C230 155 232 175 245 180"/>
<path d="M178 262C175 235 200 215 238 225"/>
<path d="M205 255C205 240 220 232 232 240"/>
<path d="M165 108C185 125 190 150 175 180C160 205 165 218 190 215C210 210 225 205 243 215" stroke="#b8c440"/>
</g>
<text x="1237.5" y="1370" text-anchor="middle" font-family="DejaVu Sans, sans-serif" font-size="14" font-weight="bold" fill="#102f3e">GeoSphere</text>
<text x="1237.5" y="1389" text-anchor="middle" font-family="Liberation Sans, sans-serif" font-size="16" fill="#102f3e" letter-spacing=".6">Austria</text>
<path d="M1309.5 1349L1338.5 1320.5L1345 1323L1349 1327L1354 1329L1358 1328L1366 1331L1369 1336L1373 1339L1373 1345L1369 1348L1356 1363.5L1340 1351L1324 1364Z" fill="#1e9bf0"/>
<path d="M1363 1338A3 3 0 0 1 1364 1344" fill="none" stroke="#fff" stroke-width=".8"/>
</svg>
</div></body></html>
